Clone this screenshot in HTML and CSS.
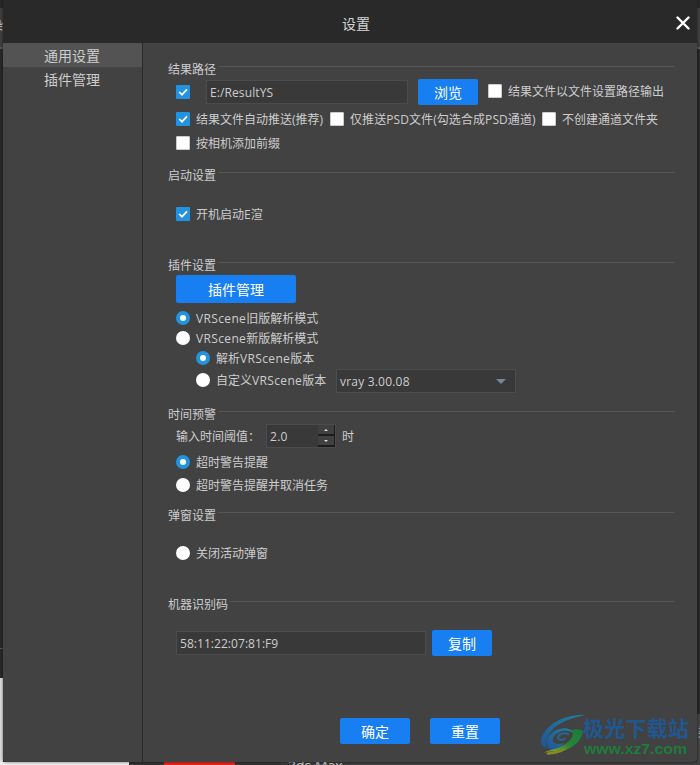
FILE: index.html
```html
<!DOCTYPE html>
<html lang="zh-CN">
<head>
<meta charset="utf-8">
<title>设置</title>
<link rel="stylesheet" href="styles.css">
</head>
<body>
<div class="edge edge-left"><span class="edge-char">染</span></div>
<div class="edge edge-right"><span class="edge-char">染</span></div>
<div class="edge-bottom"><span class="red-tab"></span><span class="behind-tab">3ds Max</span></div>
<div class="window">
  <header class="titlebar"><h1>设置</h1>
    <svg class="close" width="14" height="14" viewBox="0 0 14 14"><path d="M1.5 1.5 12.5 12.5M12.5 1.5 1.5 12.5"/></svg>
  </header>
  <div class="body">
    <nav class="sidebar">
      <a class="tab active">通用设置</a>
      <a class="tab">插件管理</a>
    </nav>
    <main class="content">
      <section class="group results">
        <h2>结果路径</h2>
        <div class="row path-row"><i class="check on"><svg viewBox="0 0 14 14"><path d="M3.2 7 6 9.7 11 4.3"/></svg></i>
          <div class="field path-field"><span class="path">E:/ResultYS</span></div>
          <button class="btn browse">浏览</button>
          <label class="opt"><i class="check"></i>结果文件以文件设置路径输出</label>
        </div>
        <div class="row push-row">
          <label class="opt opt-push"><i class="check on"><svg viewBox="0 0 14 14"><path d="M3.2 7 6 9.7 11 4.3"/></svg></i>结果文件自动推送(推荐)</label>
          <label class="opt opt-psd"><i class="check"></i><span class="psd">仅推送PSD文件(勾选合成PSD通道)</span></label>
          <label class="opt"><i class="check"></i>不创建通道文件夹</label>
        </div>
        <div class="row prefix-row"><label class="opt"><i class="check"></i>按相机添加前缀</label></div>
      </section>
      <section class="group startup">
        <h2>启动设置</h2>
        <div class="row"><label class="opt"><i class="check on"><svg viewBox="0 0 14 14"><path d="M3.2 7 6 9.7 11 4.3"/></svg></i>开机启动E渲</label></div>
      </section>
      <section class="group plugins">
        <h2>插件设置</h2>
        <button class="btn plugin-btn">插件管理</button>
        <div class="row"><label class="opt"><i class="radio on"></i><span><span class="vr">VRScene</span>旧版解析模式</span></label></div>
        <div class="row"><label class="opt"><i class="radio"></i><span><span class="vr">VRScene</span>新版解析模式</span></label></div>
        <div class="row nested"><label class="opt"><i class="radio on"></i><span>解析<span class="vr">VRScene</span>版本</span></label></div>
        <div class="row nested version-row"><label class="opt custom"><i class="radio"></i><span>自定义<span class="vr">VRScene</span>版本</span></label>
          <div class="field select"><span class="vray">vray 3.00.08</span><i class="arrow"></i></div>
        </div>
      </section>
      <section class="group timing">
        <h2>时间预警</h2>
        <div class="row threshold"><span class="threshold-label">输入时间阈值：</span>
          <div class="field spin"><span class="num">2.0</span><span class="steps"><i class="up"></i><i class="down"></i></span></div>
          <span class="unit">时</span>
        </div>
        <div class="row warn"><label class="opt"><i class="radio on"></i>超时警告提醒</label></div>
        <div class="row"><label class="opt"><i class="radio"></i>超时警告提醒并取消任务</label></div>
      </section>
      <section class="group popup">
        <h2>弹窗设置</h2>
        <div class="row"><label class="opt"><i class="radio"></i>关闭活动弹窗</label></div>
      </section>
      <section class="group machine">
        <h2>机器识别码</h2>
        <div class="row"><div class="field code-field"><span class="code">58:11:22:07:81:F9</span></div><button class="btn copy">复制</button></div>
      </section>
      <footer class="actions"><button class="btn">确定</button><button class="btn">重置</button></footer>
    </main>
  </div>
</div>
<svg class="watermark" width="160" height="50" viewBox="0 0 160 50">
  <defs>
    <linearGradient id="blue" x1="0" y1="1" x2="1" y2="0"><stop offset="0" stop-color="#20549a"/><stop offset="1" stop-color="#247f9b"/></linearGradient>
    <linearGradient id="green" x1="0" y1="1" x2="1" y2="0"><stop offset="0" stop-color="#a3ac20"/><stop offset=".5" stop-color="#25843a"/><stop offset="1" stop-color="#197b3c"/></linearGradient>
  </defs>
  <path fill="url(#blue)" d="M45 1C30 0 14 6 6 16C-1 25 -1 32 7 34C4 29 7 21 14 14C22 7 33 4 45 1Z"/>
  <path fill="url(#blue)" d="M9 35C3 28 9 18 19 15C26 13 32 15 33 19C27 15 18 17 14 22C10 28 16 32 24 29C20 35 13 37 9 35Z"/>
  <path fill="none" stroke="#216697" stroke-width="2" d="M29 20C23 18 18 20 18 24C19 27 24 26 25 24"/>
  <path fill="url(#green)" d="M31 16C35 15 40 15 43 17C42 25 36 32 27 35C19 38 11 36 4 39C9 35 17 36 25 30C32 26 35 20 31 16Z"/>
  <path fill="#858a25" d="M6 39C14 36 22 37 29 34C22 39 14 40 8 41Z"/>
  <text class="wm-cn" x="43" y="22" textLength="106">极光下载站</text>
  <text class="wm-url" x="44" y="40" textLength="103" lengthAdjust="spacingAndGlyphs">www.xz7.com</text>
</svg>
</body>
</html>
```
FILE: styles.css
```css
* { box-sizing: border-box; }
body {
  margin: 0; width: 700px; height: 765px; overflow: hidden; position: relative;
  background: #303030; color: #cdcdcd;
  font: 12px/16px "Open Sans", "Noto Sans CJK SC", sans-serif;
}
h1, h2 { margin: 0; font-weight: 400; }
i { display: block; flex: none; }
.window {
  position: relative; width: 694px; height: 762px; margin: 0 3px;
  background: #424242; border-radius: 0 0 4px 4px; overflow: hidden;
  box-shadow: 0 0 3px rgba(0,0,0,.6);
}
.titlebar { height: 43px; background: #292929; display: flex; align-items: center; padding: 4px 7px 0 20px; }
.titlebar h1 { flex: 1; text-align: center; font-size: 14px; padding-left: 13px; color: #d6d6d6; }
.close { fill: none; stroke: #fff; stroke-width: 2.4; stroke-linecap: round; margin-top: -2px; margin-right: 0; }
.body { display: flex; height: 719px; }
.sidebar { width: 140px; border-right: 1px solid #2a2a2a; }
.tab { display: block; height: 24px; line-height: 25px; text-align: center; font-size: 14px; padding-right: 1px; }
.tab.active { background: #535353; }
.content { flex: 1; padding: 23px 23px 0 25px; }

.group { padding-left: 8px; }
.group h2 { display: flex; height: 7px; line-height: 7px; font-size: 12px; margin-left: -8px; white-space: nowrap; }
.group h2::after { content: ""; flex: 1; height: 1px; margin-left: 2px; background: #575757; }
.results { height: 106px; }
.startup { height: 90px; }
.plugins { height: 149px; }
.timing { height: 101px; }
.popup { height: 89px; }
.machine { height: 117px; }

.row { display: flex; align-items: center; white-space: nowrap; }
.opt { display: flex; align-items: center; gap: 6px; margin-top: 2px; }
.opt > i { margin-bottom: 2px; }
.check { width: 14px; height: 14px; background: #fff; border: 1px solid #ccc; border-radius: 1px; }
.check.on { background: #2493df; border: 0; }
.check svg { display: block; fill: none; stroke: #fff; stroke-width: 1.7; }
.radio { width: 14px; height: 14px; border-radius: 50%; background: #fff; }
.radio.on { border: 4px solid #2493df; }
.field { display: flex; align-items: center; height: 24px; background: #393939; border: 1px solid #4c4c4c; padding-left: 3px; }
.field > span:first-child { margin-top: 2px; }
.btn { border: 0; border-radius: 2px; padding: 2px 0 0; height: 26px; width: 60px; background: #187ff3; color: #fff; font: 14px/22px "Open Sans", "Noto Sans CJK SC", sans-serif; }

.path-row { height: 26px; margin-top: 6px; }
.path-field { width: 202px; margin: 0 10px 0 16px; }
.path { letter-spacing: .1px; }
.browse { margin-right: 10px; }
.path-row > .opt { margin-top: 0; }
.push-row { height: 24px; margin-top: 2px; }
.opt-push { width: 154px; }
.opt-psd { width: 212px; }
.psd { letter-spacing: .08px; }
.prefix-row { height: 24px; }
.startup .row { height: 24px; margin-top: 23px; }

.plugin-btn { display: block; width: 120px; height: 28px; margin-top: 6px; margin-bottom: 5px; }
.plugins .row { height: 20px; }
.plugins .nested { padding-left: 20px; }
.plugins .version-row { height: 24px; }
.custom { width: 140px; }
.vr { letter-spacing: .35px; }
.select { width: 180px; justify-content: space-between; padding-right: 9px; margin-top: 2px; }
.vray { letter-spacing: .2px; }
.arrow { border: 5px solid transparent; border-top-color: #75839b; border-bottom: 0; }

.threshold { height: 24px; margin-top: 6px; }
.threshold-label { width: 90px; margin-top: 2px; }
.spin { width: 70px; justify-content: space-between; padding-right: 0; }
.num { letter-spacing: .3px; }
.steps { width: 17px; height: 22px; display: grid; grid-template-rows: 11px 11px; }
.steps i { border: solid #1c1c1c; border-width: 0 1px 2px 0; background: #404040; display: grid; place-items: center; }
.steps i::before { content: ""; border: 2px solid transparent; border-bottom-color: #ddd; border-top: 0; }
.steps .down::before { border: 2px solid transparent; border-top-color: #ddd; border-bottom: 0; }
.unit { margin-left: 6px; margin-top: 2px; }
.timing .warn { margin-top: 2px; }
.timing .row:not(.threshold) { height: 23px; }
.popup .row { height: 24px; margin-top: 22px; }
.machine .row { height: 26px; margin-top: 22px; }
.code-field { width: 250px; margin-right: 6px; }
.code { letter-spacing: .05px; }
.actions { display: flex; gap: 20px; padding-left: 172px; }
.actions .btn { width: 70px; }

.edge { position: absolute; top: 0; width: 3px; height: 765px; overflow: hidden; }
.edge-left { left: 0; background: linear-gradient(#292929 8px, #414141 8px 47px, #555 47px 49px, #292929 49px 648px, #555 648px 649px, #292929 649px 678px, #ddd 678px); }
.edge-right { right: 0; background: linear-gradient(#292929 8px, #414141 8px 47px, #555 47px 49px, #292929 49px 714px, #444 714px); }
.edge-char { position: absolute; left: -9px; top: 18px; }
.edge-right .edge-char { left: 1px; top: 725px; }
.edge-bottom { position: absolute; left: 0; top: 762px; width: 700px; height: 3px; overflow: hidden; background: linear-gradient(90deg, #eee 129px, #333 129px 281px, #3b3b3b 281px 350px, #404040 350px); display: flex; padding-left: 164px; }
.red-tab { width: 71px; height: 3px; background: #e52518; }
.behind-tab { margin-left: 53px; margin-top: -4px; font-size: 14px; white-space: nowrap; }
.watermark { position: absolute; left: 540px; top: 714px; overflow: visible; }
.wm-cn { font: 700 21px "Noto Sans CJK SC", sans-serif; fill: #215791; }
.wm-url { font: 700 14px "Liberation Sans", sans-serif; fill: #1f7b3d; }
```
